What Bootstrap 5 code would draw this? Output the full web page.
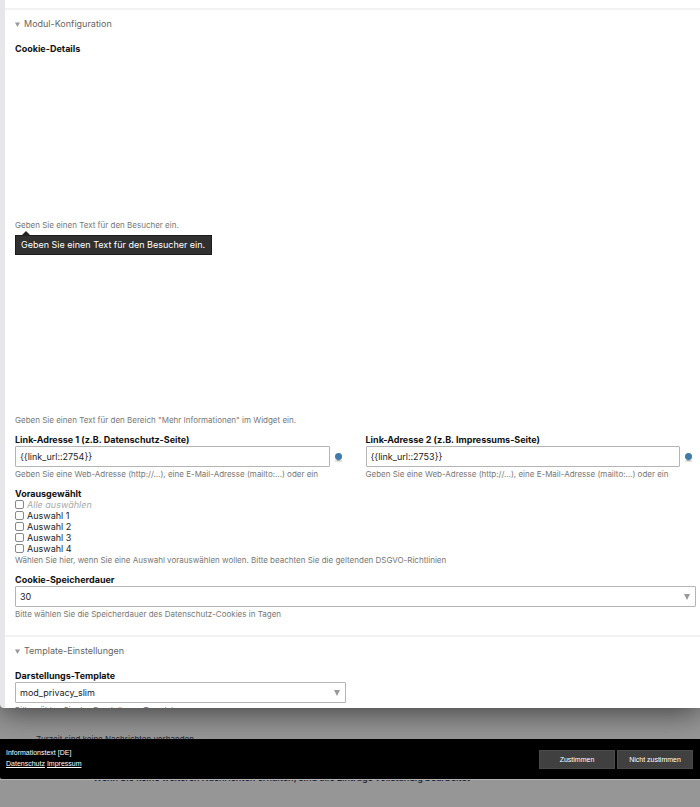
<!DOCTYPE html>
<html lang="de">
<head>
<meta charset="utf-8">
<meta name="viewport" content="width=device-width, initial-scale=1">
<title>Modul-Konfiguration</title>
<link href="https://cdn.jsdelivr.net/npm/bootstrap@5.3.0/dist/css/bootstrap.min.css" rel="stylesheet">
<style>
body{font-family:Inter,"Liberation Sans",sans-serif;font-size:9px;line-height:11px;color:#222;background:#969696}
.modal-sheet{min-height:0;border-left:5px solid #e7e7ea;border-bottom-left-radius:4px;box-shadow:0 4px 30px rgba(0,0,0,.6);z-index:1}
.sheet-section{padding:0 4px 0 10px;border-top:2px solid #f2f2f2}
.sheet-section.first{margin-top:8px}
.sheet-legend{font-size:9px;line-height:12px;color:#666;padding-top:8px;margin-bottom:13px;gap:4px}
.sheet-legend svg{width:5px;height:5px;fill:#999}
.field-title{display:block;font-size:9px;line-height:12px;font-weight:700;color:#111;margin:0}
.choices .field-title{line-height:11px}
.hint{font-size:8px;line-height:12px;color:#777;margin:0;white-space:nowrap}
.after-control{padding-top:1px}
.editor-area{height:164px}
.editor-area.second{height:183px}
.section-end{height:15px}
.two-col{display:grid;grid-template-columns:1fr 1fr;column-gap:20px}
.field-control{width:100%;height:21px;padding:0 4px;border:1px solid #b5b5b5;border-radius:1px;background:#fff;color:#222;font-size:9px;line-height:19px;appearance:none}
.input-line{gap:4px}
.picker{width:12px;height:12px}
.picker svg{display:block;width:9px;height:10px}
.field-select svg{position:absolute;right:6px;top:8px;width:6px;height:6px;fill:#999;pointer-events:none}
.choice{height:11px;gap:3px}
.choice input{appearance:none;width:9px;height:9px;margin:0;border:1px solid #888;border-radius:2px;background:#fff}
.choice input:checked{background:#4582b0}
.all-choice{color:#aaa;font-style:italic}
.tip-box{position:absolute;left:0;top:16px;padding:0 6px 0 5px;height:20px;line-height:18px;background:#303030;border:1px solid #1c1c1c;color:#fff;white-space:nowrap}
.tip-box::before{content:"";position:absolute;left:5px;top:-5px;border:5px solid transparent;border-top:0;border-bottom-color:#222}
.under{height:31px;padding:26px 36px 0;font-size:8px;color:#1d2433}
.consent{background:#000;color:#fff;height:40px;font-family:"Liberation Sans",Arial,sans-serif;font-size:7px;line-height:11px;padding:0 7px 2px 6px;border-bottom-left-radius:2px}
.consent a{color:#fff}
.consent button{width:76px;height:19px;border:1px solid #4a4a4a;background:#404040;color:#fff;font-size:7px;line-height:17px;padding:0}
.consent-actions{gap:2px;padding-top:2px}
.tail{height:28px;border-top:1px solid #b4b4b4;padding-left:93px;font-size:9px;font-weight:600;color:#1d2433}
.tail p{margin-top:-8px;white-space:nowrap}
</style>
<script src="https://cdn.jsdelivr.net/npm/bootstrap@5.3.0/dist/js/bootstrap.bundle.min.js"></script>
</head>
<body class="vh-100 overflow-hidden d-flex flex-column">
<main class="modal-sheet bg-white flex-grow-1 position-relative overflow-hidden">
  <section class="sheet-section first">
    <h2 class="sheet-legend d-flex align-items-center fw-normal"><svg viewBox="0 0 6 6"><path d="M0 .5h6L3 6z"/></svg>Modul-Konfiguration</h2>
    <h3 class="field-title">Cookie-Details</h3>
    <div class="editor-area"></div>
    <div class="position-relative">
      <p class="hint">Geben Sie einen Text für den Besucher ein.</p>
      <div class="tip-box" role="tooltip">Geben Sie einen Text für den Besucher ein.</div>
    </div>
    <div class="editor-area second"></div>
    <p class="hint mb-2">Geben Sie einen Text für den Bereich "Mehr Informationen" im Widget ein.</p>
    <div class="two-col mb-2">
      <div>
        <label class="field-title" for="link1">Link-Adresse 1 (z.B. Datenschutz-Seite)</label>
        <div class="input-line d-flex align-items-center">
          <input class="field-control" id="link1" type="text" value="{{link_url::2754}}">
          <button class="picker btn p-0 border-0 flex-shrink-0" type="button" aria-label="Seite auswählen"><svg viewBox="0 0 9 10"><path d="M1 8.5h7v1H1z" fill="#c9c3b5"/><circle cx="4.500" cy="4.500" r="3.500" fill="#3f7ba8"/><path d="M3 7.500h3v1H3z" fill="#65818f"/></svg></button>
        </div>
        <p class="hint after-control">Geben Sie eine Web-Adresse (http://…), eine E-Mail-Adresse (mailto:…) oder ein</p>
      </div>
      <div>
        <label class="field-title" for="link2">Link-Adresse 2 (z.B. Impressums-Seite)</label>
        <div class="input-line d-flex align-items-center">
          <input class="field-control" id="link2" type="text" value="{{link_url::2753}}">
          <button class="picker btn p-0 border-0 flex-shrink-0" type="button" aria-label="Seite auswählen"><svg viewBox="0 0 9 10"><path d="M1 8.5h7v1H1z" fill="#c9c3b5"/><circle cx="4.500" cy="4.500" r="3.500" fill="#3f7ba8"/><path d="M3 7.500h3v1H3z" fill="#65818f"/></svg></button>
        </div>
        <p class="hint after-control">Geben Sie eine Web-Adresse (http://…), eine E-Mail-Adresse (mailto:…) oder ein</p>
      </div>
    </div>
    <fieldset class="choices mb-2">
      <legend class="field-title">Vorausgewählt</legend>
      <div class="choice d-flex align-items-center all-choice"><input type="checkbox" id="c0"><label for="c0">Alle auswählen</label></div>
      <div class="choice d-flex align-items-center"><input type="checkbox" id="c1"><label for="c1">Auswahl 1</label></div>
      <div class="choice d-flex align-items-center"><input type="checkbox" id="c2"><label for="c2">Auswahl 2</label></div>
      <div class="choice d-flex align-items-center"><input type="checkbox" id="c3"><label for="c3">Auswahl 3</label></div>
      <div class="choice d-flex align-items-center"><input type="checkbox" id="c4"><label for="c4">Auswahl 4</label></div>
      <p class="hint">Wählen Sie hier, wenn Sie eine Auswahl vorauswählen wollen. Bitte beachten Sie die geltenden DSGVO-Richtlinien</p>
    </fieldset>
    <label class="field-title" for="days">Cookie-Speicherdauer</label>
    <div class="field-select position-relative">
      <select class="field-control d-block" id="days"><option>30</option></select>
      <svg viewBox="0 0 6 6"><path d="M0 0h6L3 6z"/></svg>
    </div>
    <p class="hint after-control">Bitte wählen Sie die Speicherdauer des Datenschutz-Cookies in Tagen</p>
    <div class="section-end"></div>
  </section>
  <section class="sheet-section">
    <h2 class="sheet-legend d-flex align-items-center fw-normal"><svg viewBox="0 0 6 6"><path d="M0 .5h6L3 6z"/></svg>Template-Einstellungen</h2>
    <div class="two-col">
      <div>
        <label class="field-title" for="tpl">Darstellungs-Template</label>
        <div class="field-select position-relative">
          <select class="field-control d-block" id="tpl"><option>mod_privacy_slim</option></select>
          <svg viewBox="0 0 6 6"><path d="M0 0h6L3 6z"/></svg>
        </div>
        <p class="hint after-control">Bitte wählen Sie das Darstellungs-Template</p>
      </div>
    </div>
  </section>
</main>
<div class="under overflow-hidden flex-shrink-0">Zurzeit sind keine Nachrichten vorhanden.</div>
<footer class="consent d-flex align-items-center justify-content-between flex-shrink-0 position-relative">
  <div>Informationstext [DE]<br><a href="#">Datenschutz</a> <a href="#">Impressum</a></div>
  <div class="consent-actions d-flex"><button type="button">Zustimmen</button><button type="button">Nicht zustimmen</button></div>
</footer>
<div class="tail flex-shrink-0 overflow-hidden"><p class="mb-0">Wenn Sie keine weiteren Nachrichten erhalten, sind alle Einträge vollständig bearbeitet</p></div>
</body>
</html>
